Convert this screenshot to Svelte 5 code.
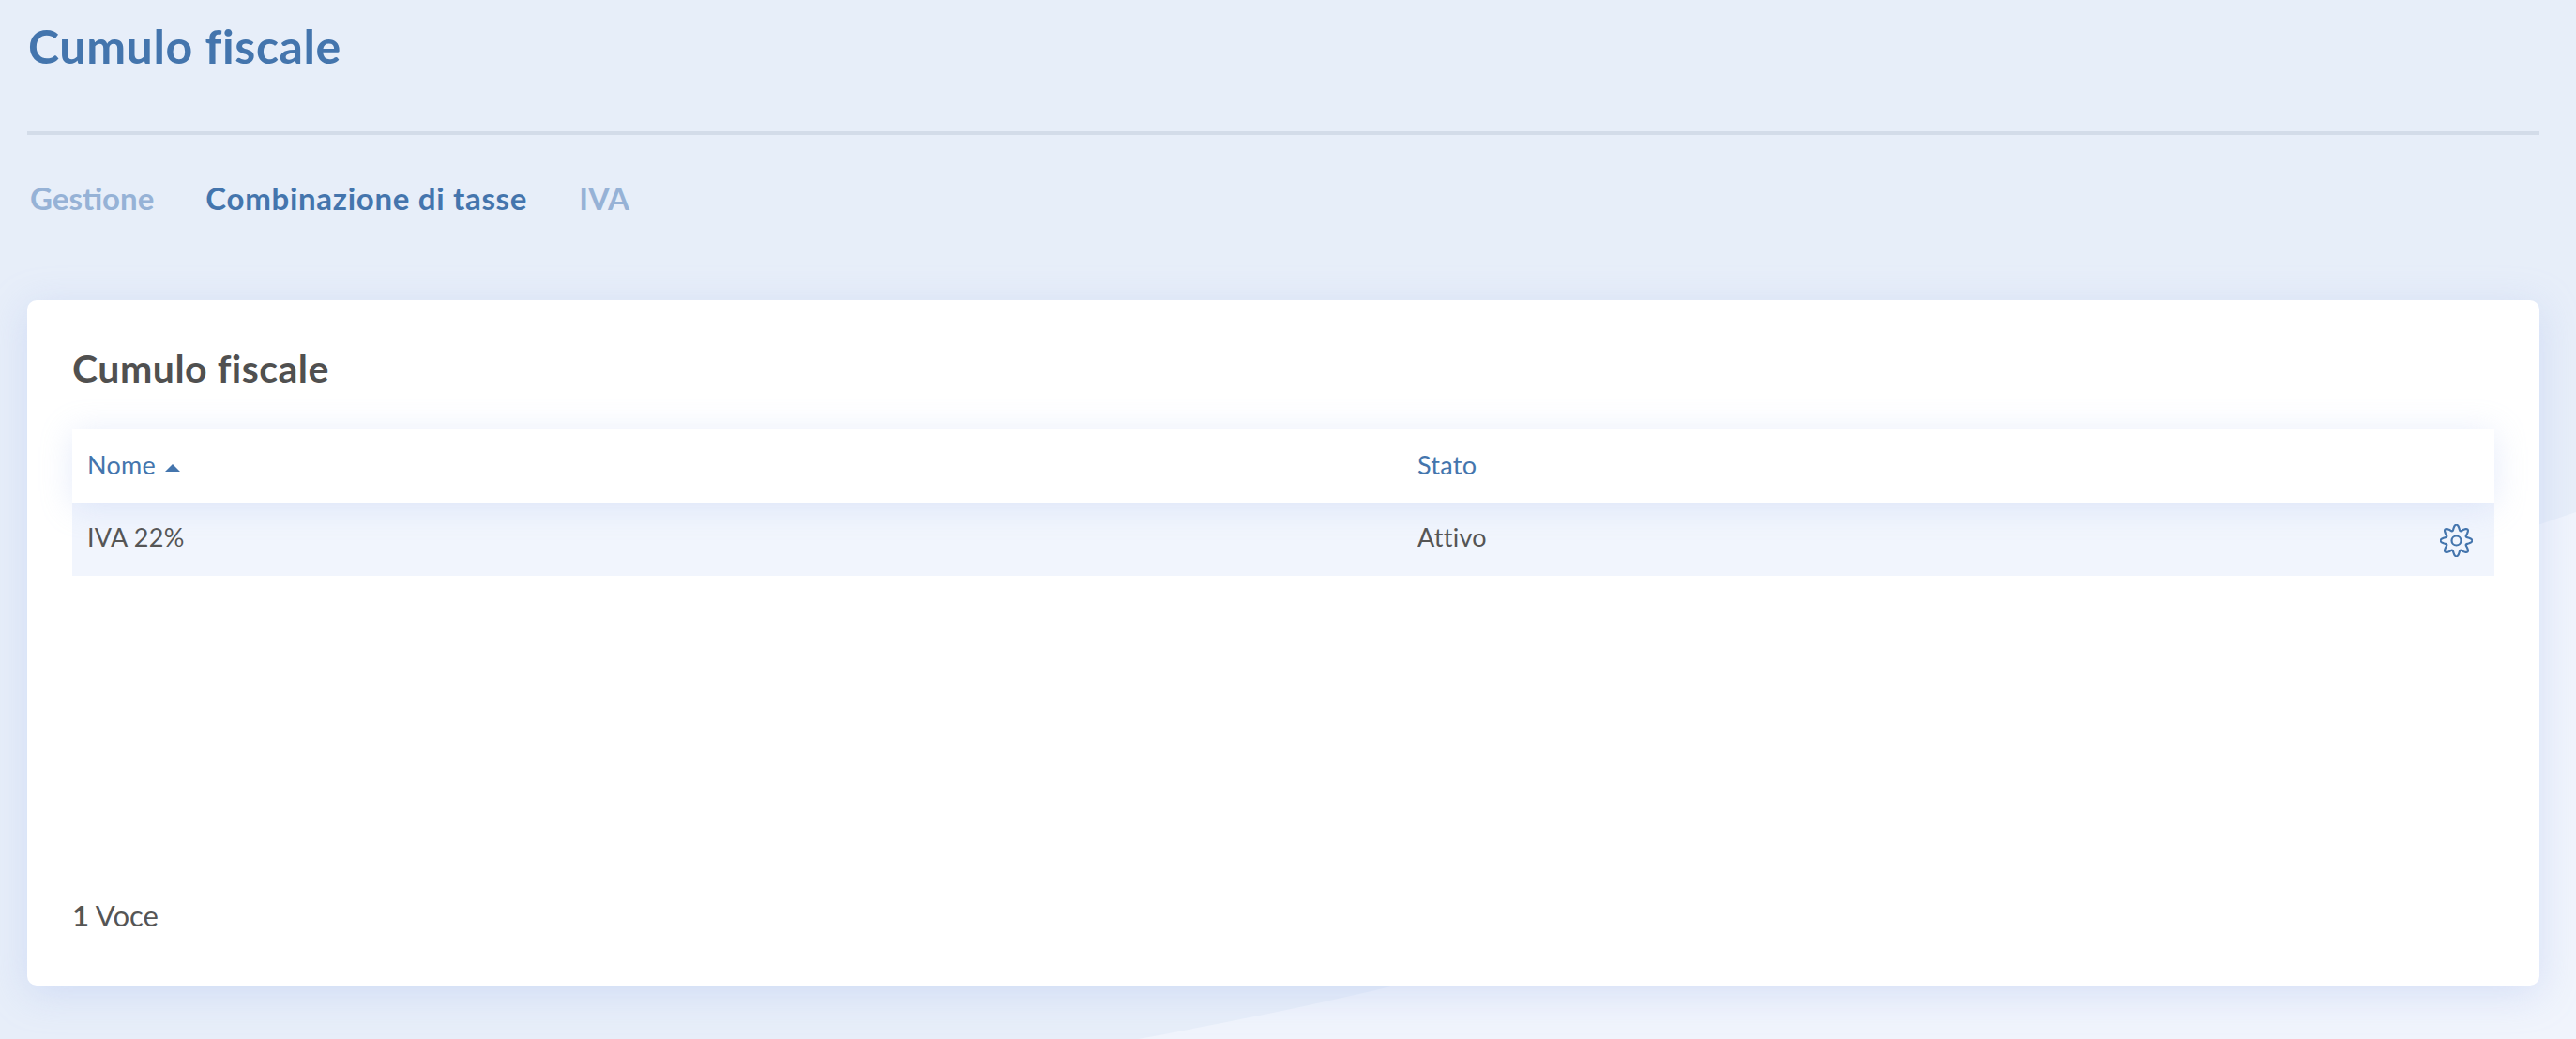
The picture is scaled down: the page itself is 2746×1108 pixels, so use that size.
<script lang="ts">
  const tabs = [
    { label: 'Gestione', active: false },
    { label: 'Combinazione di tasse', active: true },
    { label: 'IVA', active: false }
  ];
  const rows = [{ name: 'IVA 22%', status: 'Attivo' }];

  // 8 lobed cog outline, r wobbles around the centre
  const cog = Array.from({ length: 160 }, (_, i) => {
    const t = (i / 160) * Math.PI * 2;
    const r = 14 + 2.9 * Math.cos(8 * t);
    const x = 17.5 + r * Math.sin(t);
    const y = 17.5 - r * Math.cos(t);
    return `${i ? 'L' : 'M'}${x.toFixed(2)} ${y.toFixed(2)}`;
  }).join(' ') + ' Z';
</script>

<div class="page">
  <svg class="bg" viewBox="0 0 2746 1108" aria-hidden="true">
    <path d="M1213 1108 C1300 1092 1400 1072 1487 1051 C1800 975 2400 660 2746 546 V1108 Z" />
  </svg>

  <h1>Cumulo fiscale</h1>

  <nav>
    {#each tabs as tab}
      <span class="tab" class:active={tab.active}>{tab.label}</span>
    {/each}
  </nav>

  <section class="card">
    <h2>Cumulo fiscale</h2>

    <div class="table">
      <div class="row head">
        <div class="name">Nome <i class="caret"></i></div>
        <div class="status">Stato</div>
      </div>
      {#each rows as row}
        <div class="row body">
          <div class="name">{row.name}</div>
          <div class="status">{row.status}</div>
          <svg class="cog" viewBox="0 0 35 35" aria-label="impostazioni">
            <path d={cog} />
            <circle cx="17.5" cy="17.5" r="5" />
          </svg>
        </div>
      {/each}
    </div>

    <footer><b>1</b> Voce</footer>
  </section>
</div>

<style>
  :global(body) {
    margin: 0;
    background: #e7eef9;
  }
  .page {
    position: relative;
    height: 1108px;
    overflow: hidden;
    padding: 0 39px 0 29px;
    box-sizing: border-box;
    font-family: Lato, "Open Sans", sans-serif;
    color: #555;
  }
  .bg {
    position: absolute;
    inset: 0;
    width: 2746px;
    height: 1108px;
  }
  .bg path { fill: #f0f4fc; }

  h1 {
    position: relative;
    margin: 0;
    height: 140px;
    padding: 18px 0 0 1px;
    box-sizing: border-box;
    font-size: 50px;
    letter-spacing: 0.6px;
    line-height: 62px;
    font-weight: 700;
    color: #4475ad;
  }
  nav {
    position: relative;
    display: flex;
    gap: 55px;
    height: 180px;
    box-sizing: border-box;
    padding: 44px 0 0 3px;
    border-top: 4px solid #d3dce9;
    font-size: 33px;
    line-height: 46px;
    font-weight: 700;
  }
  .tab { color: #96b2d6; }
  .tab.active {
    color: #4475ad;
    letter-spacing: 0.7px;
  }

  .card {
    position: relative;
    display: flex;
    flex-direction: column;
    height: 731px;
    box-sizing: border-box;
    padding: 48px 48px 0;
    background: #fff;
    border-radius: 10px;
    box-shadow: 0 8px 40px rgba(170, 190, 240, 0.38);
  }
  h2 {
    margin: 0;
    font-size: 41px;
    letter-spacing: 0.5px;
    line-height: 50px;
    font-weight: 700;
    color: #505050;
  }
  .table {
    margin-top: 39px;
  }
  .row {
    position: relative;
    display: grid;
    grid-template-columns: 1418px 1fr;
    align-items: center;
    padding-left: 16px;
    padding-bottom: 2px;
    box-sizing: border-box;
    font-size: 27px;
    letter-spacing: 0.3px;
  }
  .head {
    z-index: 1;
    height: 79px;
    color: #4475ad;
    background: #fff;
    box-shadow: 0 4px 34px rgba(170, 190, 240, 0.3);
  }
  .body {
    height: 78px;
    padding-bottom: 5px;
    background: #f1f5fd;
  }
  .caret {
    display: inline-block;
    width: 0;
    height: 0;
    margin-left: 3px;
    vertical-align: 3px;
    border-left: 8px solid transparent;
    border-right: 8px solid transparent;
    border-bottom: 8px solid #4475ad;
  }
  .cog {
    position: absolute;
    right: 23px;
    top: 23px;
    width: 35px;
    height: 35px;
    fill: none;
    stroke: #4475ad;
    stroke-width: 2.2;
  }
  footer {
    margin-top: auto;
    margin-bottom: 55px;
    font-size: 31px;
    line-height: 40px;
  }
  footer b { font-weight: 700; }
</style>
